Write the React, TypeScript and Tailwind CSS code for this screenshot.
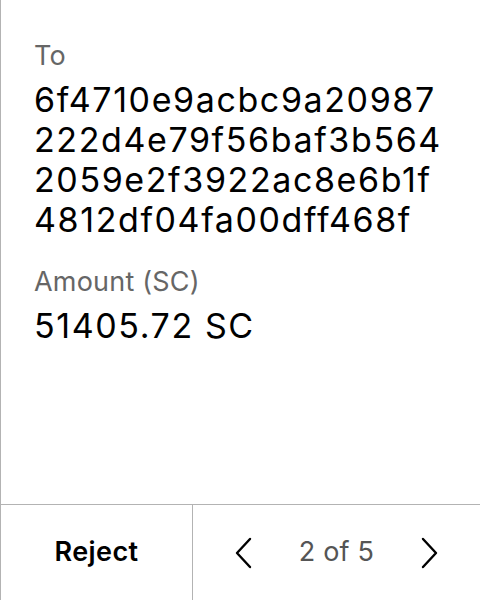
const hashLines = [
  "6f4710e9acbc9a20987",
  "222d4e79f56baf3b564",
  "2059e2f3922ac8e6b1f",
  "4812df04fa00dff468f",
];

function Field({ label, children }: { label: string; children: React.ReactNode }) {
  return (
    <div className="flex flex-col">
      <span className="text-[27px] leading-[32px] tracking-[0.2px] text-[#666666]">{label}</span>
      <div className="mt-[8px] text-[34px] leading-[40px] tracking-[1.6px] text-black">{children}</div>
    </div>
  );
}

function Chevron({ dir }: { dir: "left" | "right" }) {
  return (
    <svg width="19" height="32" viewBox="0 0 19 32" fill="none" stroke="black" strokeWidth="2.4" strokeLinecap="round" strokeLinejoin="round">
      {dir === "left" ? <polyline points="16,2 3,16 16,30" /> : <polyline points="3,2 16,16 3,30" />}
    </svg>
  );
}

export default function App() {
  return (
    <div
      className="flex h-[600px] w-[480px] flex-col border-l border-[#b3b3b3] bg-white"
      style={{ fontFamily: "Inter, 'Noto Sans', sans-serif" }}
    >
      <div className="flex flex-1 flex-col gap-[26px] px-[33px] pt-[40px]">
        <Field label="To">
          {hashLines.map((line) => (
            <div key={line}>{line}</div>
          ))}
        </Field>
        <Field label="Amount (SC)">51405.72 SC</Field>
      </div>
      <div className="flex h-[96px] border-t border-[#b3b3b3]">
        <button className="flex w-[191px] items-center justify-center text-[27px] font-semibold tracking-[0.4px] text-black">
          Reject
        </button>
        <div className="flex flex-1 items-center justify-center gap-[46px] border-l border-[#b3b3b3]">
          <Chevron dir="left" />
          <span className="text-[27px] tracking-[0.2px] text-[#555555]">2 of 5</span>
          <Chevron dir="right" />
        </div>
      </div>
    </div>
  );
}
